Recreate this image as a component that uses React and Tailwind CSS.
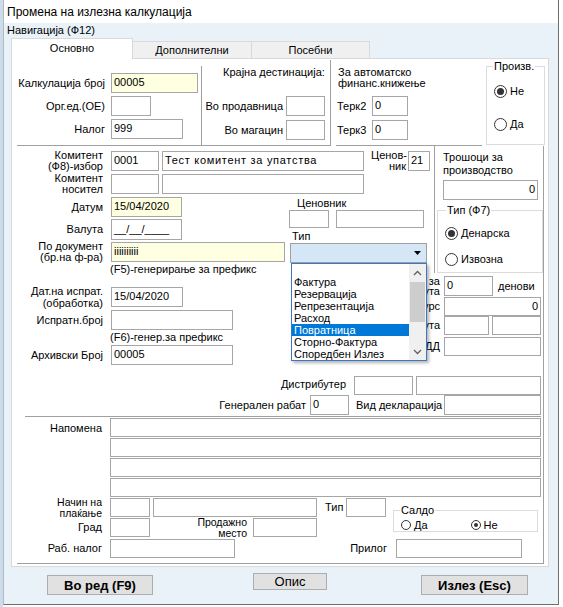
import React from 'react';
import clsx from 'clsx';
import { twMerge } from 'tailwind-merge';

const cn = (...args) => twMerge(clsx(args));

const Field = ({ className, yellow, right, children }) => (
  <div
    className={cn(
      'h-[20px] shrink-0 border border-[#a6a6a6] bg-white px-[2px] pt-[1px] leading-[14px] whitespace-nowrap overflow-hidden',
      yellow && 'bg-[#ffffe1]',
      right && 'text-right',
      className
    )}
  >
    {children}
  </div>
);

const Label = ({ className, children }) => (
  <div className={cn('shrink-0 text-right leading-[11px] whitespace-nowrap', className)}>{children}</div>
);

const Radio = ({ checked, small, className, children }) => (
  <div className={cn('flex items-center h-[14px] shrink-0', className)}>
    <span
      className={cn(
        'flex items-center justify-center rounded-full border border-[#333] bg-white',
        small ? 'w-[10px] h-[10px]' : 'w-[13px] h-[13px]'
      )}
    >
      {checked && <span className={cn('rounded-full bg-[#333]', small ? 'w-[4px] h-[4px]' : 'w-[7px] h-[7px]')} />}
    </span>
    <span className="ml-[3px]">{children}</span>
  </div>
);

const GroupTitle = ({ className, children }) => (
  <div className={cn('-mt-[7px] self-start bg-white px-px leading-[13px]', className)}>{children}</div>
);

const Chevron = ({ down }) => (
  <svg width="9" height="6" viewBox="0 0 9 6">
    <path d={down ? 'M1 1 L4.5 4.5 L8 1' : 'M1 5 L4.5 1.5 L8 5'} stroke="#606060" strokeWidth="1.3" fill="none" />
  </svg>
);

const tipItems = ['Фактура', 'Резервација', 'Репрезентација', 'Расход', 'Повратница', 'Сторно-Фактура', 'Споредбен Излез'];

// Тип combo with its list dropped open
const TipCombo = () => (
  <div className="relative ml-[3px] w-[137px] h-[20px] border border-[#a0a0a0] bg-[#d5e7f7] flex justify-end">
    <div className="w-[17px] h-full flex items-center justify-center">
      <svg width="7" height="4" viewBox="0 0 7 4">
        <path d="M0 0H7L3.5 4Z" fill="#000" />
      </svg>
    </div>
    <div className="absolute left-0 top-[19px] z-20 w-[136px] h-[98px] bg-white border border-[#3c78c8] shadow-[2px_2px_3px_rgba(0,0,0,0.3)] flex">
      <div className="flex-1 flex flex-col leading-[12px]">
        <div className="h-[12px]" />
        {tipItems.map((item) => (
          <div
            key={item}
            className={clsx('h-[12px] pl-[2px] whitespace-nowrap', item === 'Повратница' && 'bg-[#0078d7] text-white')}
          >
            {item}
          </div>
        ))}
      </div>
      <div className="w-[17px] bg-[#f0f0f0] flex flex-col items-center">
        <div className="h-[17px] flex items-center justify-center">
          <Chevron />
        </div>
        <div className="mt-px w-[15px] h-[40px] bg-[#cdcdcd]" />
        <div className="flex-1" />
        <div className="h-[17px] flex items-center justify-center">
          <Chevron down />
        </div>
      </div>
    </div>
  </div>
);

const TopSection = () => (
  <div className="h-[87px] flex items-end shrink-0">
    <div className="ml-[5px] w-[185px] h-[80px] border-r border-b border-[#a0a0a0] pt-[7px] flex flex-col gap-[3px]">
      <div className="flex items-center">
        <Label className="w-[88px]">Калкулација број</Label>
        <Field yellow className="ml-[6px] w-[87px]">00005</Field>
      </div>
      <div className="flex items-center">
        <Label className="w-[88px]">Орг.ед.(ОЕ)</Label>
        <Field className="ml-[6px] w-[40px]" />
      </div>
      <div className="flex items-center">
        <Label className="w-[88px]">Налог</Label>
        <Field className="ml-[6px] w-[72px]">999</Field>
      </div>
    </div>

    <div className="w-[129px] h-[86px] border-r border-b border-[#a0a0a0] flex flex-col">
      <div className="pl-[21px] pt-[6px] leading-[13px]">Крајна дестинација:</div>
      <div className="mt-[17px] flex items-center">
        <Label className="w-[81px]">Во продавница</Label>
        <Field className="ml-[3px] w-[39px]" />
      </div>
      <div className="mt-[4px] flex items-center">
        <Label className="w-[81px]">Во магацин</Label>
        <Field className="ml-[3px] w-[39px]" />
      </div>
    </div>

    <div className="ml-[5px] w-[146px] h-[86px] border-b border-[#a0a0a0] flex flex-col">
      <div className="pl-[2px] pt-[7px] leading-[11px]">
        За автоматско
        <br />
        финанс.книжење
      </div>
      <div className="mt-[7px] flex items-center">
        <div className="w-[36px] pl-px">Терк2</div>
        <Field className="w-[36px]">0</Field>
      </div>
      <div className="mt-[4px] flex items-center">
        <div className="w-[36px] pl-px">Терк3</div>
        <Field className="w-[36px]">0</Field>
      </div>
    </div>

    <div className="ml-[4px] mb-[1px] w-[59px] h-[79px] border border-[#dcdcdc] flex flex-col">
      <GroupTitle className="ml-[6px]">Произв.</GroupTitle>
      <Radio checked className="ml-[7px] mt-[11px]">Не</Radio>
      <Radio className="ml-[7px] mt-[19px]">Да</Radio>
    </div>
  </div>
);

const MainSection = () => (
  <div className="ml-[5px] w-[527px] h-[418px] shrink-0 border-r border-b border-[#a0a0a0] flex flex-col">
    <div className="h-[219px] flex shrink-0">
      {/* left portion */}
      <div className="w-[417px] flex flex-col">
        <div className="mt-[5px] h-[20px] flex items-center">
          <Label className="w-[86px]">
            Комитент
            <br />
            (Ф8)-избор
          </Label>
          <Field className="ml-[8px] w-[48px]">0001</Field>
          <Field className="ml-[3px] w-[202px] tracking-[0.7px]">Тест комитент за упатства</Field>
          <Label className="ml-[7px] w-[35px]">
            Ценов-
            <br />
            ник
          </Label>
          <Field className="ml-[2px] w-[22px]">21</Field>
        </div>
        <div className="mt-[3px] h-[20px] flex items-center">
          <Label className="w-[86px]">
            Комитент
            <br />
            носител
          </Label>
          <Field className="ml-[8px] w-[48px]" />
          <Field className="ml-[3px] w-[202px]" />
        </div>

        <div className="mt-[3px] flex">
          <div className="w-[270px] flex flex-col">
            <div className="h-[20px] flex items-center">
              <Label className="w-[86px] leading-[13px]">Датум</Label>
              <Field yellow className="ml-[8px] w-[71px]">15/04/2020</Field>
            </div>
            <div className="mt-[2px] flex items-center">
              <Label className="w-[86px] leading-[13px]">Валута</Label>
              <Field className="ml-[8px] w-[71px] h-[21px] pt-[2px]">__/__/____</Field>
            </div>
            <div className="mt-[2px] h-[20px] flex items-center">
              <Label className="w-[86px]">
                По документ
                <br />
                (бр.на ф-ра)
              </Label>
              <Field yellow className="ml-[8px] w-[174px]">iiiiiiiiii</Field>
            </div>
            <div className="ml-[93px] leading-[14px]">(F5)-генерирање за префикс</div>
            <div className="mt-[11px] h-[20px] flex items-center">
              <Label className="w-[86px] leading-[12px]">
                Дат.на испрат.
                <br />
                (обработка)
              </Label>
              <Field className="ml-[8px] w-[72px]">15/04/2020</Field>
            </div>
            <div className="mt-[3px] flex items-center">
              <Label className="w-[86px] leading-[13px]">Испратн.број</Label>
              <Field className="ml-[8px] w-[122px]" />
            </div>
            <div className="ml-[93px] leading-[14px]">(F6)-генер.за префикс</div>
            <div className="mt-px flex items-center">
              <Label className="w-[86px] leading-[13px]">Архивски Број</Label>
              <Field className="ml-[8px] w-[122px]">00005</Field>
            </div>
          </div>

          <div className="w-[147px] flex flex-col">
            <div className="pl-[10px] leading-[13px]">Ценовник</div>
            <div className="flex">
              <Field className="ml-[2px] w-[40px] h-[18px]" />
              <Field className="ml-[7px] w-[88px] h-[18px]" />
            </div>
            <div className="mt-[2px] pl-[5px] leading-[13px]">Тип</div>
            <TipCombo />
          </div>
        </div>
      </div>

      {/* right column */}
      <div className="w-[109px] flex flex-col">
        <div className="h-[127px] border-l border-[#a0a0a0] flex flex-col">
          <div className="pl-[8px] pt-[5px] leading-[13px]">
            Трошоци за
            <br />
            производство
          </div>
          <Field right className="ml-[8px] mt-[3px] w-[95px]">0</Field>
          <div className="ml-[2px] mt-[10px] w-[106px] h-[63px] border border-[#dcdcdc] flex flex-col">
            <GroupTitle className="ml-[8px]">Тип (Ф7)</GroupTitle>
            <Radio checked className="ml-[7px] mt-[9px]">Денарска</Radio>
            <Radio className="ml-[7px] mt-[12px]">Извозна</Radio>
          </div>
        </div>
        <div className="mt-[3px] h-[20px] flex items-center">
          <Label className="-ml-[60px] w-[66px] leading-[10px]">
            Рок за
            <br />
            валута
          </Label>
          <Field className="ml-[4px] w-[49px]">0</Field>
          <div className="ml-[5px]">денови</div>
        </div>
        <div className="mt-px h-[19px] flex items-center">
          <Label className="-ml-[60px] w-[66px]">Курс</Label>
          <Field right className="ml-[4px] w-[97px] h-[19px]">0</Field>
        </div>
        <div className="h-[19px] flex items-center">
          <Label className="-ml-[60px] w-[66px]">Валута</Label>
          <Field className="ml-[4px] w-[45px] h-[19px]" />
          <Field className="ml-[3px] w-[49px] h-[19px]" />
        </div>
        <div className="mt-[2px] h-[19px] flex items-center">
          <Label className="-ml-[60px] w-[66px]">Број ДД</Label>
          <Field className="ml-[4px] w-[97px] h-[19px]" />
        </div>
      </div>
    </div>

    <div className="mt-[11px] h-[19px] flex items-center">
      <Label className="w-[329px] leading-[13px] pb-[3px]">Дистрибутер</Label>
      <Field className="ml-[8px] w-[59px] h-[19px]" />
      <Field className="ml-[3px] w-[125px] h-[19px]" />
    </div>
    <div className="h-[20px] flex items-center">
      <Label className="w-[289px] leading-[13px]">Генерален рабат</Label>
      <Field className="ml-[4px] w-[39px]">0</Field>
      <div className="ml-[7px] w-[85px] whitespace-nowrap">Вид декларација</div>
      <Field className="ml-[3px] w-[97px]" />
    </div>
    <div className="mt-px ml-[8px] w-[516px] h-px bg-[#a0a0a0]" />

    <div className="mt-px flex">
      <Label className="w-[85px] pt-[4px] leading-[13px]">Напомена</Label>
      <div className="ml-[8px] flex flex-col gap-px">
        <Field className="w-[431px] h-[19px]" />
        <Field className="w-[431px] h-[19px]" />
        <Field className="w-[431px] h-[19px]" />
        <Field className="w-[431px] h-[19px]" />
      </div>
    </div>

    <div className="mt-px h-[19px] flex items-center">
      <Label className="w-[85px] text-[10.5px] leading-[11px]">
        Начин на
        <br />
        плаќање
      </Label>
      <Field className="ml-[8px] w-[40px] h-[19px]" />
      <Field className="ml-[3px] w-[164px] h-[19px]" />
      <div className="ml-[8px] w-[21px]">Тип</div>
      <Field className="w-[40px] h-[19px]" />
    </div>
    <div className="mt-px h-[19px] flex items-center">
      <Label className="w-[85px] leading-[13px]">Град</Label>
      <Field className="ml-[8px] w-[40px] h-[19px]" />
      <Label className="w-[97px] text-[10.5px] leading-[11px]">
        Продажно
        <br />
        место
      </Label>
      <Field className="ml-[6px] w-[64px] h-[19px]" />
      <div className="ml-[76px] -mt-[8px] self-start w-[145px] h-[22px] border border-[#dcdcdc] flex flex-col">
        <GroupTitle className="ml-[6px]">Салдо</GroupTitle>
        <div className="mt-px flex">
          <Radio small className="ml-[7px]">Да</Radio>
          <Radio small checked className="ml-[43px]">Не</Radio>
        </div>
      </div>
    </div>
    <div className="mt-[2px] h-[19px] flex items-center">
      <Label className="w-[85px] leading-[13px]">Раб. налог</Label>
      <Field className="ml-[8px] w-[125px] h-[19px]" />
      <Label className="w-[152px] leading-[13px]">Прилог</Label>
      <Field className="ml-[9px] w-[126px] h-[19px]" />
    </div>
  </div>
);

export default function App() {
  return (
    <div className="w-[563px] h-[607px] flex bg-white overflow-hidden font-['Liberation_Sans',Arial,sans-serif] text-[11px] text-black">
      <div className="w-[3px] h-full shrink-0 bg-[#cadcee]" />
      <div className="w-[556px] h-[605px] shrink-0 flex flex-col bg-white border-l border-r border-b border-l-[#b8b8b8] border-r-[#6e6e6e] border-b-[#6e6e6e]">
        <div className="h-[23px] shrink-0 flex items-center pl-[3px] text-[12px]">Промена на излезна калкулација</div>

        <div className="flex-1 flex flex-col bg-[#eaf2f9]">
          <div className="h-[15px] shrink-0 pl-[3px] leading-[15px]">Навигација (Ф12)</div>

          {/* tabs */}
          <div className="h-[20px] shrink-0 pl-[7px] flex items-end">
            <div className="relative z-10 w-[122px] h-[21px] -mb-px bg-white border border-b-0 border-[#d9d9d9] flex items-center justify-center pb-px">
              Основно
            </div>
            <div className="w-[119px] h-[17px] bg-[#f0f0f0] border border-b-0 border-l-0 border-[#d9d9d9] flex items-center justify-center">
              Дополнителни
            </div>
            <div className="w-[118px] h-[17px] bg-[#f0f0f0] border border-b-0 border-l-0 border-[#d9d9d9] flex items-center justify-center">
              Посебни
            </div>
          </div>

          <div className="ml-[7px] w-[538px] h-[509px] shrink-0 bg-white border border-[#d9d9d9] flex flex-col">
            <TopSection />
            <MainSection />
          </div>

          {/* buttons */}
          <div className="flex items-start pt-[6px] text-[13px]">
            <button className="ml-[43px] mt-[2px] w-[106px] h-[20px] bg-[#e1e1e1] border border-[#adadad] font-bold">
              Во ред (F9)
            </button>
            <button className="ml-[100px] w-[74px] h-[17px] leading-[15px] bg-[#e1e1e1] border border-[#adadad]">Опис</button>
            <button className="ml-[94px] mt-[2px] w-[107px] h-[20px] bg-[#e1e1e1] border border-[#adadad] font-bold">
              Излез (Esc)
            </button>
          </div>
        </div>
      </div>
    </div>
  );
}
